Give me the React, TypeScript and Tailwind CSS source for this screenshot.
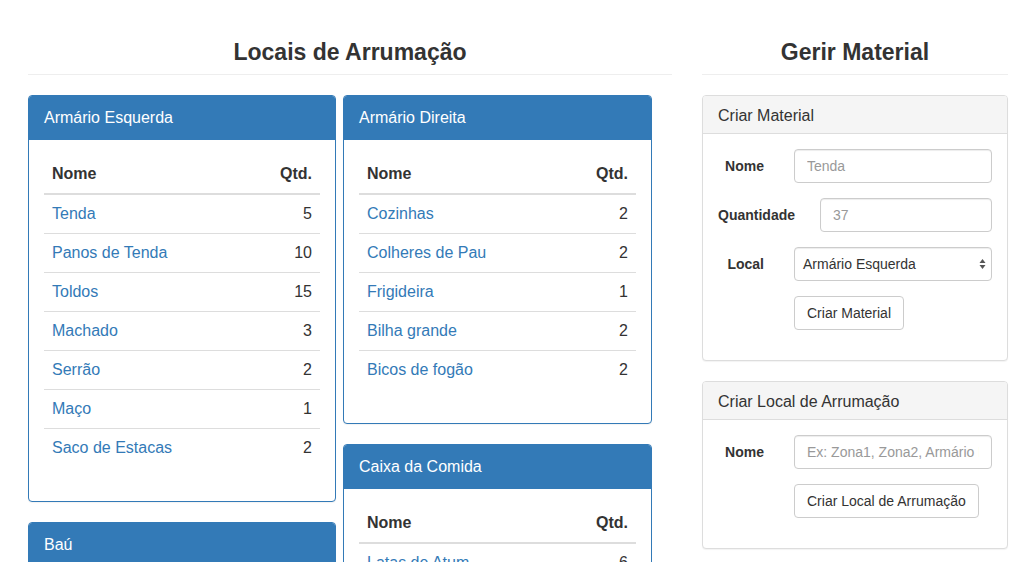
import React from "react";

type Item = { nome: string; qtd: number };
type Local = { titulo: string; itens: Item[] };

const col1: Local[] = [
  {
    titulo: "Armário Esquerda",
    itens: [
      { nome: "Tenda", qtd: 5 },
      { nome: "Panos de Tenda", qtd: 10 },
      { nome: "Toldos", qtd: 15 },
      { nome: "Machado", qtd: 3 },
      { nome: "Serrão", qtd: 2 },
      { nome: "Maço", qtd: 1 },
      { nome: "Saco de Estacas", qtd: 2 },
    ],
  },
  {
    titulo: "Baú",
    itens: [
      { nome: "Lanternas", qtd: 4 },
      { nome: "Cordas", qtd: 6 },
      { nome: "Estojo de Primeiros Socorros", qtd: 1 },
    ],
  },
];

const col2: Local[] = [
  {
    titulo: "Armário Direita",
    itens: [
      { nome: "Cozinhas", qtd: 2 },
      { nome: "Colheres de Pau", qtd: 2 },
      { nome: "Frigideira", qtd: 1 },
      { nome: "Bilha grande", qtd: 2 },
      { nome: "Bicos de fogão", qtd: 2 },
    ],
  },
  {
    titulo: "Caixa da Comida",
    itens: [
      { nome: "Latas de Atum", qtd: 6 },
      { nome: "Massa", qtd: 4 },
      { nome: "Arroz", qtd: 3 },
    ],
  },
];

function PanelLocal({ local }: { local: Local }) {
  return (
    <div className="mb-5 rounded-[4px] border border-[#337ab7] bg-white shadow-[0_1px_1px_rgba(0,0,0,0.05)]">
      <div className="rounded-t-[3px] border-b border-transparent bg-[#337ab7] px-[15px] py-[10px] text-[16px] leading-[23px] text-white">
        {local.titulo}
      </div>
      <div className="px-[15px] pt-[15px] pb-[34px]">
        <div className="flex justify-between border-b-2 border-[#ddd] px-2 py-2 text-[16px] font-bold leading-[22px] text-[#333]">
          <span>Nome</span>
          <span>Qtd.</span>
        </div>
        {local.itens.map((it, i) => (
          <div
            key={it.nome}
            className={
              i > 0
                ? "flex justify-between border-t border-[#ddd] px-2 py-2 text-[16px] leading-[22px]"
                : "flex justify-between px-2 py-2 text-[16px] leading-[22px]"
            }
          >
            <a className="text-[#337ab7]">{it.nome}</a>
            <span className="text-[#333]">{it.qtd}</span>
          </div>
        ))}
      </div>
    </div>
  );
}

const inputCls =
  "h-[34px] flex-1 min-w-0 rounded-[4px] border border-[#ccc] bg-white px-3 text-[14px] text-[#555] shadow-[inset_0_1px_1px_rgba(0,0,0,0.075)] outline-none placeholder:text-[#999]";

const btnCls =
  "h-[34px] rounded-[4px] border border-[#ccc] bg-white px-3 text-[14px] leading-[20px] text-[#333]";

function PanelDefault({ titulo, children }: { titulo: string; children: React.ReactNode }) {
  return (
    <div className="mb-5 rounded-[4px] border border-[#ddd] bg-white shadow-[0_1px_1px_rgba(0,0,0,0.05)]">
      <div className="rounded-t-[3px] border-b border-[#ddd] bg-[#f5f5f5] px-[15px] pt-[11px] pb-[9px] text-[16px] leading-[17px] text-[#333]">
        {titulo}
      </div>
      <div className="p-[15px]">{children}</div>
    </div>
  );
}

export default function App() {
  return (
    <div
      className="min-h-screen bg-white text-[#333]"
      style={{ fontFamily: '"Liberation Sans", Arial, sans-serif' }}
    >
      <div className="flex gap-[30px] px-[28px]">
        <div className="w-[644px]">
          <h2 className="mb-5 border-b border-[#eee] pt-[39px] pb-[9px] text-center text-[23px] font-bold leading-[26px] text-[#333]">
            Locais de Arrumação
          </h2>
          <div className="flex gap-[7px]">
            <div className="w-[308px]">
              {col1.map((l) => (
                <PanelLocal key={l.titulo} local={l} />
              ))}
            </div>
            <div className="w-[309px]">
              {col2.map((l) => (
                <PanelLocal key={l.titulo} local={l} />
              ))}
            </div>
          </div>
        </div>
        <div className="w-[306px]">
          <h2 className="mb-5 border-b border-[#eee] pt-[39px] pb-[9px] text-center text-[23px] font-bold leading-[26px] text-[#333]">
            Gerir Material
          </h2>
          <PanelDefault titulo="Criar Material">
            <div className="mb-[15px] flex items-center">
              <label className="w-[46px] text-right text-[14px] font-bold">Nome</label>
              <input className={inputCls + " ml-[30px]"} placeholder="Tenda" />
            </div>
            <div className="mb-[15px] flex items-center">
              <label className="text-[14px] font-bold">Quantidade</label>
              <input className={inputCls + " ml-[25px]"} placeholder="37" />
            </div>
            <div className="mb-[15px] flex items-center">
              <label className="w-[46px] text-right text-[14px] font-bold">Local</label>
              <div className="relative ml-[30px] flex h-[34px] flex-1 items-center rounded-[4px] border border-[#ccc] bg-white pl-2 text-[14px] text-[#555] shadow-[inset_0_1px_1px_rgba(0,0,0,0.075)]">
                <span className="text-[#333]">Armário Esquerda</span>
                <svg
                  className="absolute right-[5px] top-1/2 -translate-y-1/2"
                  width="7"
                  height="11"
                  viewBox="0 0 7 11"
                >
                  <path d="M3.5 0.5 L6.5 4.5 L0.5 4.5 Z" fill="#555" />
                  <path d="M3.5 10.5 L6.5 6.5 L0.5 6.5 Z" fill="#555" />
                </svg>
              </div>
            </div>
            <div className="mb-[15px] pl-[76px]">
              <button className={btnCls}>Criar Material</button>
            </div>
          </PanelDefault>
          <PanelDefault titulo="Criar Local de Arrumação">
            <div className="mb-[15px] flex items-center">
              <label className="w-[46px] text-right text-[14px] font-bold">Nome</label>
              <input
                className={inputCls + " ml-[30px]"}
                placeholder="Ex: Zona1, Zona2, Armário Esquerda"
              />
            </div>
            <div className="mb-[15px] pl-[76px]">
              <button className={btnCls}>Criar Local de Arrumação</button>
            </div>
          </PanelDefault>
        </div>
      </div>
    </div>
  );
}
